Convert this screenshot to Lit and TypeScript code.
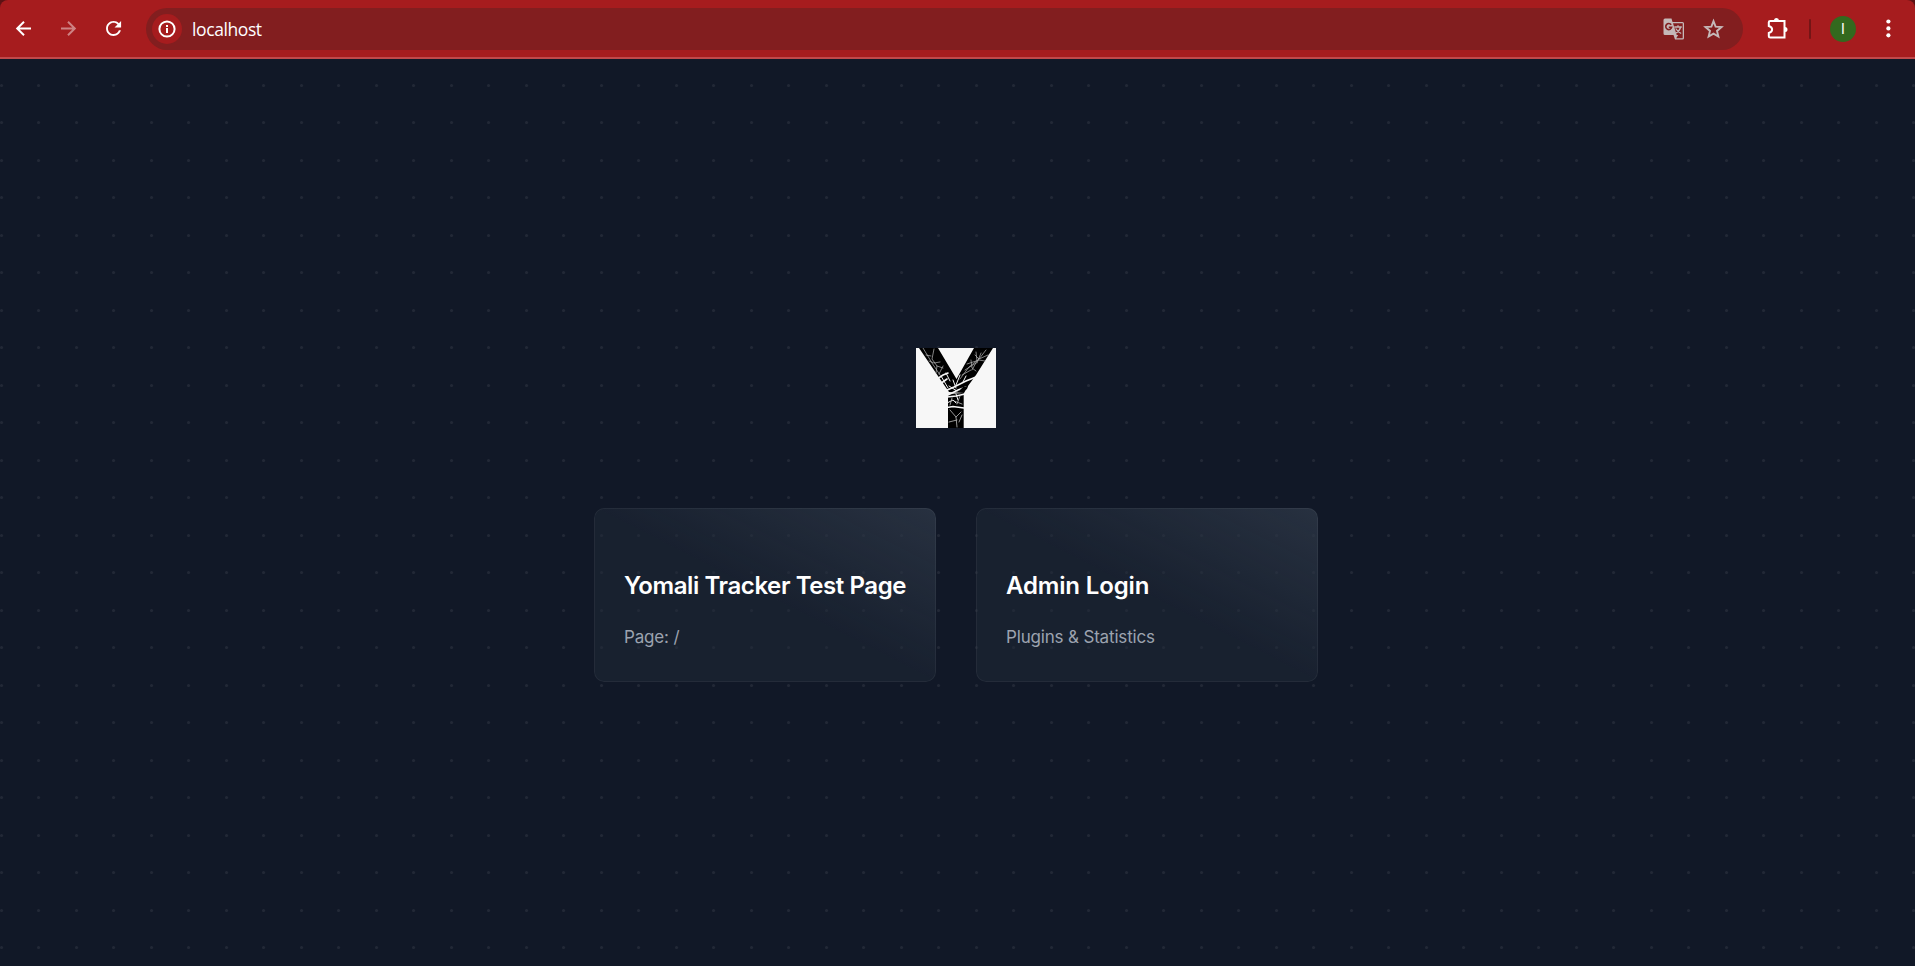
import { LitElement, html, css } from "lit";
import { customElement } from "lit/decorators.js";

const CARDS = [
  { title: "Yomali Tracker Test Page", text: "Page: /", kind: "tracker" },
  { title: "Admin Login", text: "Plugins & Statistics", kind: "admin" },
];

@customElement("browser-bar")
class BrowserBar extends LitElement {
  static styles = css`
    :host { display: block; background: #5c1214; flex: none; }
    .bar {
      box-sizing: border-box; height: 59px; padding: 1px 17px 0 12px;
      display: flex; align-items: center; background: #a61c1e;
      border-bottom: 2px solid #c0484a; border-radius: 8px 8px 0 0; color: #fff;
    }
    svg { display: block; flex: none; fill: none; stroke: currentColor; stroke-width: 2; }
    .nav { display: flex; gap: 21px; width: 134px; }
    .dim { opacity: .45; }
    .solid { fill: currentColor; stroke: none; }
    .address {
      flex: 1; box-sizing: border-box; height: 42px; border-radius: 21px; background: #821e1f;
      display: flex; align-items: center; padding: 0 18px 0 6px;
      font: 17.5px "Open Sans", "Noto Sans", sans-serif; color: #fff;
    }
    .info { width: 30px; height: 30px; border-radius: 50%; background: #a61c1e; display: grid; place-items: center; margin-right: 10px; }
    .url { flex: 1; letter-spacing: -0.4px; line-height: 24px; padding-bottom: 1px; }
    .tools { display: flex; gap: 18px; color: #c5b8b8; }
    .ext { margin-left: 22px; }
    .rule { width: 2px; height: 20px; border-radius: 1px; background: #741516; margin: 0 19px 0 18px; }
    .avatar { width: 26px; height: 26px; border-radius: 50%; background: #33691e; display: grid; place-items: center; font: 14px/26px Roboto, sans-serif; margin-right: 22px; }
  `;
  render() {
    return html`<div class="bar">
      <div class="nav">
        <svg width="24" height="24" viewBox="0 0 24 24"><path d="M19 11.500H5.500M12 4.700l-6.800 6.800 6.800 6.800"/></svg>
        <svg class="dim" width="24" height="24" viewBox="0 0 24 24"><path d="M4 11.500h13.500M11 4.700l6.800 6.800-6.800 6.800"/></svg>
        <svg class="solid" width="24" height="24" viewBox="0 0 24 24"><path transform="translate(.3 .2) scale(.94)" d="M17.650 6.350C16.200 4.900 14.210 4 12 4c-4.420 0-7.990 3.580-7.990 8s3.570 8 7.990 8c3.730 0 6.840-2.550 7.730-6h-2.080c-.82 2.330-3.040 4-5.650 4-3.310 0-6-2.690-6-6s2.690-6 6-6c1.660 0 3.140.69 4.220 1.780L13 11h7V4l-2.350 2.350z"/></svg>
      </div>
      <div class="address">
        <div class="info"><svg width="18" height="18" viewBox="0 0 18 18"><circle cx="9" cy="9" r="7.600"/><path d="M9 8v5M9 5v2"/></svg></div>
        <span class="url">localhost</span>
        <div class="tools">
          <svg width="22" height="22" viewBox="0 0 22 22">
            <path class="solid" d="M2 .5h6.500l1 3.500h10q1.500 0 1.500 1.500V20q0 1.500-1.500 1.500H12L10.500 17H2Q.5 17 .5 15.500V2Q.5.5 2 .5z"/>
            <path fill="#821e1f" stroke="none" d="M10 5.300h9.700v14.900h-6.500l2-3.200h-1.500z"/>
            <path stroke="#821e1f" stroke-width="1.600" d="M8.200 6.800A3 3 0 1 0 8.700 9.200H5.800"/>
            <path stroke-width="1.300" d="M11.300 9h7.500M15 7.300V9M17.700 9q-1 4-4.800 6M12.700 10.500q2 3.300 5.500 5"/>
          </svg>
          <svg width="22" height="22" viewBox="0 0 22 22"><path stroke-width="1.900" d="M10.500 3.200l2.100 5.500 5.900.4-4.500 3.800 1.400 5.700-4.900-3-4.900 3L7 12.900 2.500 9.100l5.900-.4z"/></svg>
        </div>
      </div>
      <svg class="ext" width="26" height="26" viewBox="0 0 26 26">
        <path d="M5.300 5h14.200v16.500H5.300q-1.500 0-1.500-1.300v-3.300q3.300-1 3.300-3.400T3.800 10V6.300Q3.800 5 5.300 5z"/>
        <path class="solid" d="M9 4.500a2.500 2.500 0 0 1 5 0zM20 11a2.500 2.500 0 0 1 0 5z"/>
      </svg>
      <i class="rule"></i>
      <span class="avatar">I</span>
      <svg class="solid" width="20" height="26" viewBox="0 0 20 26"><circle cx="10.400" cy="5.500" r="2.100"/><circle cx="10.400" cy="12.400" r="2.100"/><circle cx="10.400" cy="19.300" r="2.100"/></svg>
    </div>`;
  }
}

@customElement("app-root")
class AppRoot extends LitElement {
  static styles = css`
    :host { display: flex; flex-direction: column; height: 966px; overflow: hidden; background: #111827; }
    .page {
      flex: 1; padding: 289px 3px 0 0; display: flex; flex-direction: column; align-items: center; gap: 80px;
      background: url("data:image/svg+xml,%3Csvg xmlns='http://www.w3.org/2000/svg' width='37.5' height='37.5' viewBox='0 0 30 30'%3E%3Ccircle cx='1.2268' cy='1.2268' r='1.2268' fill='rgba(255,255,255,0.07)'/%3E%3C/svg%3E") 0 25px / 37.5px 37.5px;
    }
    .logo { display: block; width: 80px; height: 80px; }
    .cards { display: flex; gap: 40px; }
    .card {
      box-sizing: border-box; width: 342px; height: 174px; border-radius: 10px; padding: 60px 30px 0;
      background: linear-gradient(to bottom left, rgba(55,65,81,.5), rgba(55,65,81,0) 50%), rgba(31,41,55,.5);
      box-shadow: inset 0 0 0 1px rgba(255,255,255,.05);
      font-family: Inter, sans-serif;
    }
    h2 { margin: 0; font-size: 24px; line-height: 35px; font-weight: 600; color: #fff; white-space: nowrap; }
    .tracker { letter-spacing: -0.41px; }
    .admin { letter-spacing: -0.15px; }
    p { margin: 20px 0 0; font-size: 17px; line-height: 28px; color: #9ca3af; letter-spacing: -0.17px; }
  `;
  render() {
    return html`<browser-bar></browser-bar>
      <main class="page">
        <svg class="logo" viewBox="0 0 80 80">
          <path fill="#f7f7f7" d="M0 0h80v80H0z"/>
          <path d="M3 0h19l18.500 31L58 0h19L60 27l-8 11-4 7-15-1L22 28z"/>
          <path d="M32 46l15.700-1v35H32z"/>
          <g fill="none" stroke="#f7f7f7" stroke-linecap="round">
            <path stroke-width="1.600" d="M21 31l6-4 5-2M24 36l7-5M29 43l9-4 12-6 10-4M32 47l10-5 8-3M31 49l9-1 9-2M31 59.500l6-1 11 1.500"/>
            <path stroke-width="1" d="M25 28l7 12M30 25l4 8M37 32l3 8M44 27l-4 10M50 28l-3 6M33 38l8 5M40 46l2 6M31 55l6-3 3 3"/>
            <path stroke="#b8b8b8" stroke-width=".7" d="M7 0l9 15 8 12M18 1l-2 10 5 7-1 7M10 7l5 1M13 13l5 2 6-1M21 18l6 2M27 18l-4 8M70 2l-7 9-10 8-9 12M60 4l1 9-5 9M51 16l12-4 6 1M49 22l11-7M72 7l-9 4-4-4M55 12l1 8 4 3M46 27l9-5M65 5l-4 10"/>
            <path stroke="#bebebe" stroke-width=".8" d="M34 62l6 7 1 10M40 69l5-5M33 74l8-2M44 48l-3 8M36 50l-2 7M38 53l8 3M46 67l-3 7"/>
          </g>
          <path d="M44 42l3-3 5-1-1 3-5 3z"/>
        </svg>
        <div class="cards">
          ${CARDS.map((c) => html`<section class="card"><h2 class=${c.kind}>${c.title}</h2><p>${c.text}</p></section>`)}
        </div>
      </main>`;
  }
}
